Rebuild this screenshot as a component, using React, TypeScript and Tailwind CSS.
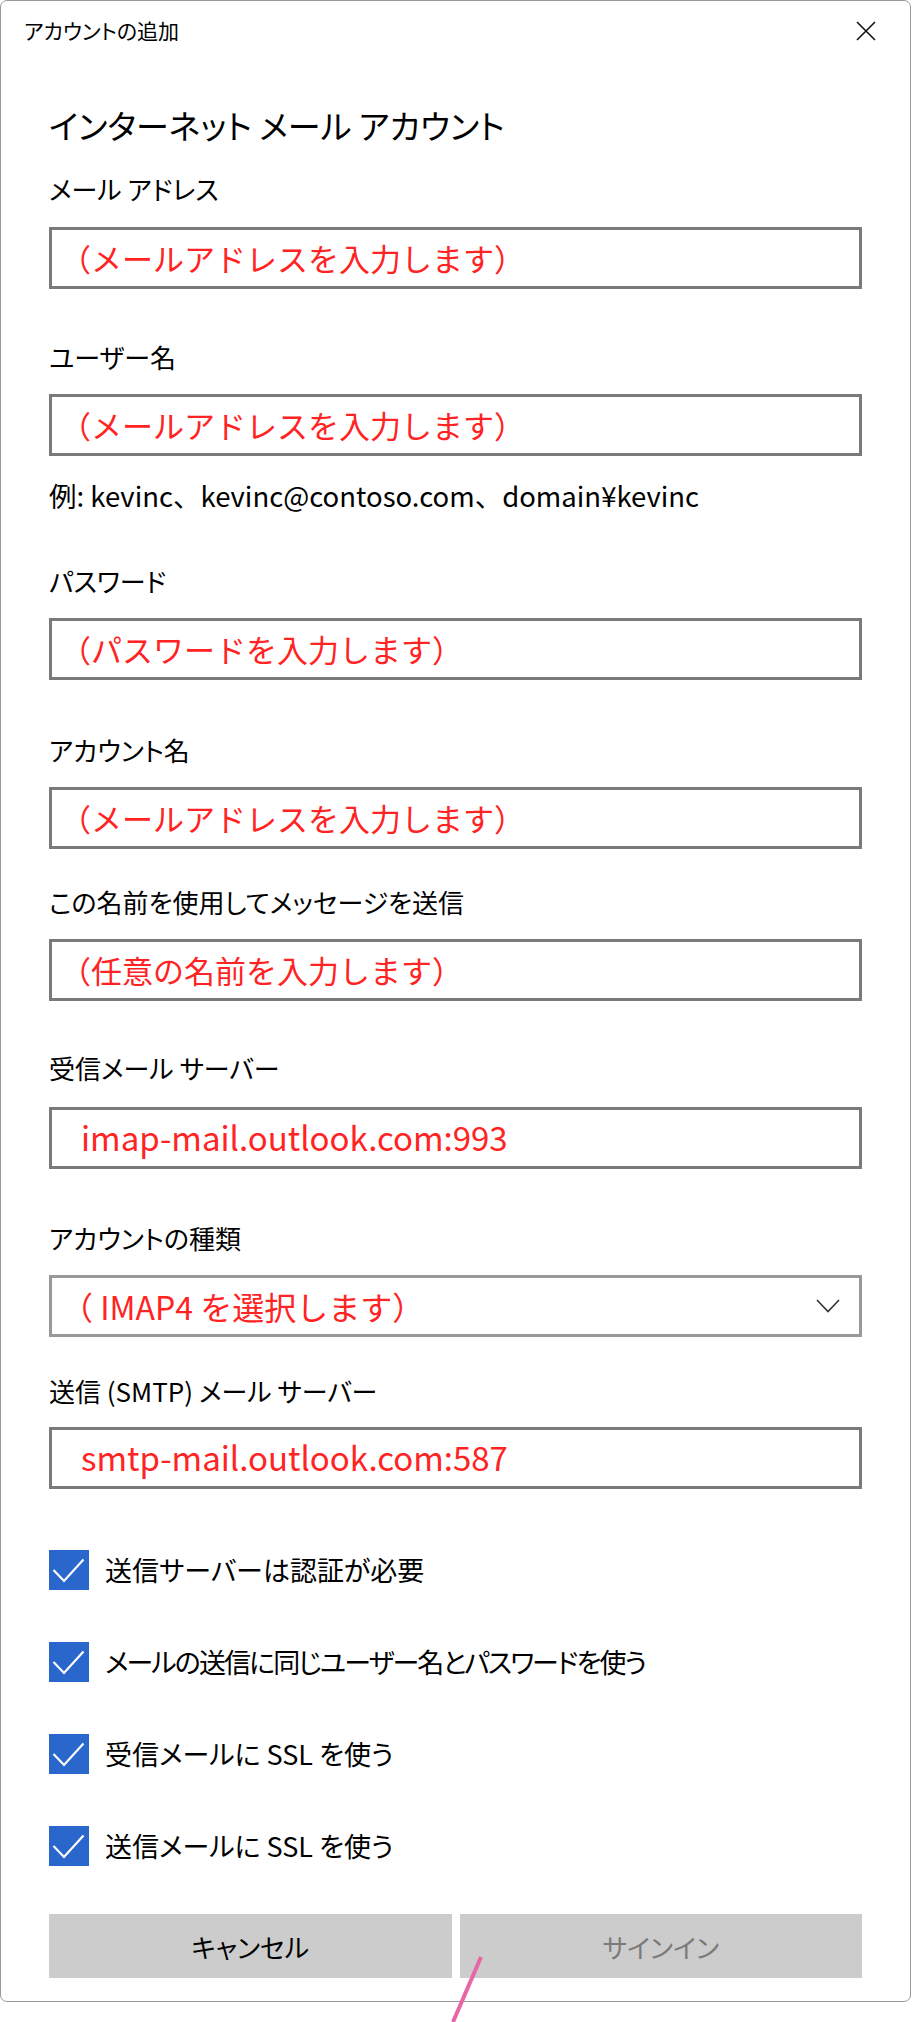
import React from "react";

function Label({ text, mt }: { text: string; mt: string }) {
  return (
    <div className={`${mt} h-[36px] leading-[36px] text-[26px] text-black whitespace-nowrap`}>{text}</div>
  );
}

function Field({ text, mt, latin }: { text: string; mt: string; latin?: boolean }) {
  return (
    <div
      className={`${mt} h-[62px] border-[3px] border-[#7a7a7a] bg-white flex items-center ${
        latin ? "pl-[29px] text-[33px]" : "pl-[8px] text-[31px] [font-feature-settings:normal]"
      } text-[#ff2323] whitespace-nowrap`}
    >
      {text}
    </div>
  );
}

function Check({ text, mt, tight }: { text: string; mt: string; tight?: boolean }) {
  return (
    <div className={`${mt} h-[40px] flex items-center`}>
      <div className="w-[40px] h-[40px] bg-[#2a67cd] shrink-0">
        <svg width="40" height="40" viewBox="0 0 40 40">
          <path d="M4.5 20 L15 31 L34.5 9.5" fill="none" stroke="#fff" strokeWidth="2.2" />
        </svg>
      </div>
      <div
        className={`ml-[16px] text-[27px] leading-[40px] text-black whitespace-nowrap ${
          tight ? "tracking-[-1.9px]" : ""
        }`}
      >
        {text}
      </div>
    </div>
  );
}

export default function App() {
  return (
    <div className="relative w-[912px] h-[2022px] bg-white font-['Noto_Sans_CJK_JP','Noto_Sans',sans-serif] [font-feature-settings:'palt']">
      <div className="w-[911px] h-[2002px] border border-[#999999] rounded-[7px] flex flex-col">
        <div className="h-[60px] flex items-center justify-between pl-[23px] pr-[34px]">
          <span className="text-[21px] text-black">アカウントの追加</span>
          <svg width="20" height="20" viewBox="0 0 20 20">
            <path d="M1 1 L19 19 M19 1 L1 19" stroke="#111" strokeWidth="1.6" />
          </svg>
        </div>
        <div className="px-[48px] flex flex-col">
          <div className="mt-[40px] h-[48px] leading-[48px] text-[33px] text-black whitespace-nowrap">
            インターネット メール アカウント
          </div>
          <Label text="メール アドレス" mt="mt-[22px]" />
          <Field text="（メールアドレスを入力します）" mt="mt-[20px]" />
          <Label text="ユーザー名" mt="mt-[50px]" />
          <Field text="（メールアドレスを入力します）" mt="mt-[19px]" />
          <div className="mt-[21px] h-[36px] leading-[36px] text-[27.5px] text-black whitespace-nowrap [font-feature-settings:normal]">
            例: kevinc、kevinc@contoso.com、domain¥kevinc
          </div>
          <Label text="パスワード" mt="mt-[50px]" />
          <Field text="（パスワードを入力します）" mt="mt-[19px]" />
          <Label text="アカウント名" mt="mt-[52px]" />
          <Field text="（メールアドレスを入力します）" mt="mt-[19px]" />
          <Label text="この名前を使用してメッセージを送信" mt="mt-[35px]" />
          <Field text="（任意の名前を入力します）" mt="mt-[19px]" />
          <Label text="受信メール サーバー" mt="mt-[49px]" />
          <Field text="imap-mail.outlook.com:993" mt="mt-[21px]" latin />
          <Label text="アカウントの種類" mt="mt-[51px]" />
          <div className="mt-[19px] h-[62px] border-[3px] border-[#999999] bg-white flex items-center justify-between pl-[9px] pr-[19px] text-[32px] text-[#ff2323] whitespace-nowrap [font-feature-settings:normal]">
            <span>（ IMAP4 を選択します）</span>
            <svg width="24" height="14" viewBox="0 0 24 14">
              <path d="M1 1 L12 12.5 L23 1" fill="none" stroke="#333" strokeWidth="1.6" />
            </svg>
          </div>
          <Label text="送信 (SMTP) メール サーバー" mt="mt-[36px]" />
          <Field text="smtp-mail.outlook.com:587" mt="mt-[18px]" latin />
          <Check text="送信サーバーは認証が必要" mt="mt-[61px]" />
          <Check text="メールの送信に同じユーザー名とパスワードを使う" mt="mt-[52px]" tight />
          <Check text="受信メールに SSL を使う" mt="mt-[52px]" />
          <Check text="送信メールに SSL を使う" mt="mt-[52px]" />
          <div className="mt-[48px] grid grid-cols-2 gap-[8px]">
            <button className="h-[64px] bg-[#cccccc] text-[26px] text-black">キャンセル</button>
            <button className="h-[64px] bg-[#cccccc] text-[26px] text-[#7a7a7a]">サインイン</button>
          </div>
        </div>
      </div>
      <svg className="absolute left-0 top-0 pointer-events-none" width="912" height="2022" viewBox="0 0 912 2022">
        <path d="M481 1957 L453 2022" stroke="#e766a5" strokeWidth="4" />
      </svg>
    </div>
  );
}
